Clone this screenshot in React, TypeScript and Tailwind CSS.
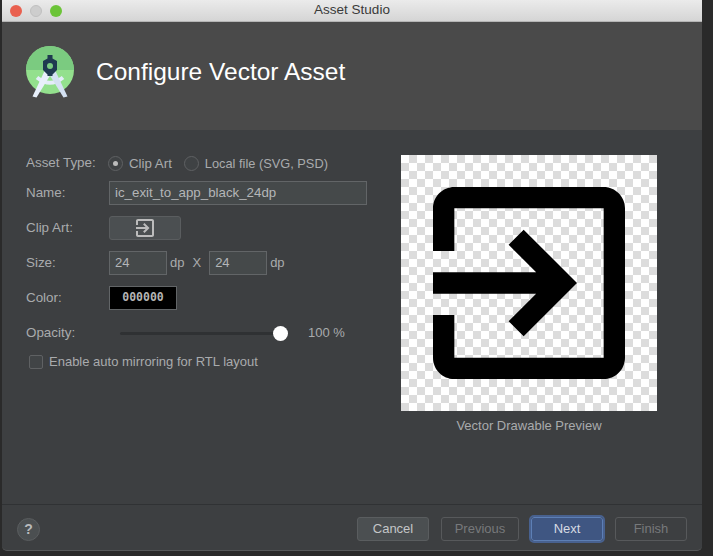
function ExitIcon({ className }: { className?: string }) {
  return (
    <svg viewBox="0 0 24 24" className={className} fill="currentColor">
      <path d="M10.09 15.59L11.5 17l5-5-5-5-1.41 1.41L12.67 11H3v2h9.67l-2.58 2.59zM19 3H5c-1.11 0-2 .9-2 2v4h2V5h14v14H5v-4H3v4c0 1.1.89 2 2 2h14c1.1 0 2-.9 2-2V5c0-1.1-.9-2-2-2z" />
    </svg>
  );
}

function StudioLogo() {
  return (
    <svg viewBox="0 0 56 56" className="w-14 h-14 shrink-0">
      <circle cx="28" cy="26" r="24" fill="#93e08d" />
      <path d="M4 26a24 24 0 0 1 48 0z" fill="#7bcb80" />
      <path d="M15 33.500Q28 44 41 33.500" fill="none" stroke="#e4edf9" strokeWidth="4" />
      <path d="M23 26l6 4L14.500 53.500 10.500 52.500z" fill="#e8f0fb" />
      <path d="M33 26l-6 4L41.500 53.500 45.500 52.500z" fill="#d4e1f2" />
      <path d="M25.500 11h5v3.500l4.500 2.500v9l-4.500 4.500v1.500h-5v-1.500l-4.500-4.500v-9l4.500-2.500z" fill="#1f3a50" />
      <circle cx="28" cy="22" r="3" fill="#7bcb80" />
    </svg>
  );
}

function Label({ children }: { children: string }) {
  return <span className="w-[83px] shrink-0 text-[13.4px] text-[#a9abad]">{children}</span>;
}

function Radio({ checked, label, className }: { checked?: boolean; label: string; className: string }) {
  return (
    <div className="flex items-center gap-[6px]">
      <span className="w-[15px] h-[15px] rounded-full border border-[#5f6163] bg-[#3f4244] flex items-center justify-center">
        {checked && <span className="w-[5px] h-[5px] rounded-full bg-[#bcbcbc]" />}
      </span>
      <span className={`text-[#a9abad] ${className}`}>{label}</span>
    </div>
  );
}

function TextBox({ value, className }: { value: string; className: string }) {
  return (
    <div className={`h-6 border border-[#626567] bg-[#45494a] pl-[5px] flex items-center text-[#b4b6b8] ${className}`}>
      {value}
    </div>
  );
}

function FooterButton({ label, kind, width }: { label: string; kind: "normal" | "disabled" | "primary"; width: string }) {
  const styles = {
    normal: "border border-[#5a5d5f] bg-[#4b4f51] text-[#c4c6c8]",
    disabled: "border border-[#57595b] bg-[#3d3f41] text-[#77797b]",
    primary: "border border-[#5d7fb5] bg-[#3f5682] text-[#d6dae2] outline-2 outline-[#48618f]",
  };
  return (
    <button className={`h-6 rounded-[3px] flex items-center justify-center text-[13px] ${width} ${styles[kind]}`}>
      {label}
    </button>
  );
}

export default function App() {
  return (
    <div
      className="w-[713px] h-[556px] bg-[#2a2a2a] overflow-hidden text-[13px]"
      style={{ fontFamily: '"Liberation Sans", Arial, sans-serif' }}
    >
      <div className="ml-[2px] w-[700px] h-[551px] rounded-b-[5px] bg-[#3d3f41] flex flex-col overflow-hidden border-b border-[#565859]">
        {/* title bar */}
        <div className="relative h-[22px] shrink-0 bg-gradient-to-b from-[#ebebeb] to-[#d5d5d5] border-b border-[#b5b5b5] flex items-center justify-center text-[13.5px] text-[#3a3a3a]">
          <div className="absolute left-[8px] top-[5px] flex gap-2">
            <span className="w-3 h-3 rounded-full bg-[#e9604f]" />
            <span className="w-3 h-3 rounded-full bg-[#cdcdcd] border border-[#c0c0c0]" />
            <span className="w-3 h-3 rounded-full bg-[#6cc438]" />
          </div>
          Asset Studio
        </div>

        {/* header */}
        <div className="h-[108px] shrink-0 bg-[#4a4a4a] flex items-center pl-[20px] pb-2 gap-[18px]">
          <StudioLogo />
          <h1 className="text-[24.5px] text-white leading-none mt-[1px]">Configure Vector Asset</h1>
        </div>

        {/* body */}
        <div className="flex-1 flex justify-between">
          <div className="pl-6 pt-[24px] w-[380px]">
            <div className="h-[19px] flex items-center">
              <Label>Asset Type:</Label>
              <div className="flex gap-[12px] ml-[-1px]">
                <Radio checked label="Clip Art" className="text-[13.3px]" />
                <Radio label="Local file (SVG, PSD)" className="text-[12.8px]" />
              </div>
            </div>
            <div className="mt-[8px] flex items-center">
              <Label>Name:</Label>
              <TextBox value="ic_exit_to_app_black_24dp" className="w-[258px] text-[13.3px]" />
            </div>
            <div className="mt-[11px] flex items-center">
              <Label>Clip Art:</Label>
              <div className="w-[72px] h-6 rounded-[3px] border border-[#5a5d5f] bg-[#4b4f51] flex items-center justify-center text-[#bcbcbc]">
                <ExitIcon className="w-[24px] h-[24px]" />
              </div>
            </div>
            <div className="mt-[11px] flex items-center">
              <Label>Size:</Label>
              <TextBox value="24" className="w-[58px]" />
              <span className="ml-[3px] text-[#a9abad]">dp</span>
              <span className="ml-[8px] text-[#a9abad]">X</span>
              <TextBox value="24" className="w-[58px] ml-[8px]" />
              <span className="ml-[3px] text-[#a9abad]">dp</span>
            </div>
            <div className="mt-[11px] flex items-center">
              <Label>Color:</Label>
              <div
                className="w-[68px] h-6 bg-black border border-[#626567] flex items-center justify-center text-[11.5px] font-bold text-[#b4b4b4]"
                style={{ fontFamily: '"DejaVu Sans Mono", monospace' }}
              >
                000000
              </div>
            </div>
            <div className="mt-[11px] h-6 flex items-center">
              <Label>Opacity:</Label>
              <div className="relative ml-[11px] w-[161px] h-[3px] rounded-full bg-[#2f3133]">
                <span className="absolute right-[-7px] top-[-6px] w-[15px] h-[15px] rounded-full bg-white" />
              </div>
              <span className="ml-[27px] text-[#a9abad]">100 %</span>
            </div>
            <div className="mt-[7px] ml-[3px] flex items-center gap-[6px]">
              <span className="w-[14px] h-[14px] rounded-[2px] border border-[#5f6163] bg-[#414446]" />
              <span className="text-[#a9abad]">Enable auto mirroring for RTL layout</span>
            </div>
          </div>

          <div className="mr-[45px] pt-[25px] flex flex-col items-center">
            <div className="w-64 h-64 text-black bg-white bg-[conic-gradient(#dcdcdc_25%,#ffffff_0_50%,#dcdcdc_0_75%,#ffffff_0)] bg-[length:16px_16px]">
              <ExitIcon className="w-64 h-64" />
            </div>
            <span className="mt-[7px] text-[#a9abad] leading-[15px]">Vector Drawable Preview</span>
          </div>
        </div>

        {/* footer */}
        <div className="h-[46px] shrink-0 border-t border-[#303234] flex items-center pl-[15px] pr-[15px] pt-[3px]">
          <span className="w-[23px] h-[23px] rounded-full bg-[#4b4f51] border border-[#5a5d5f] flex items-center justify-center text-[14px] font-bold text-[#b8babc]">
            ?
          </span>
          <div className="ml-auto flex gap-[12px]">
            <FooterButton label="Cancel" kind="normal" width="w-[72px]" />
            <FooterButton label="Previous" kind="disabled" width="w-[78px]" />
            <FooterButton label="Next" kind="primary" width="w-[72px]" />
            <FooterButton label="Finish" kind="disabled" width="w-[72px]" />
          </div>
        </div>
      </div>
    </div>
  );
}
